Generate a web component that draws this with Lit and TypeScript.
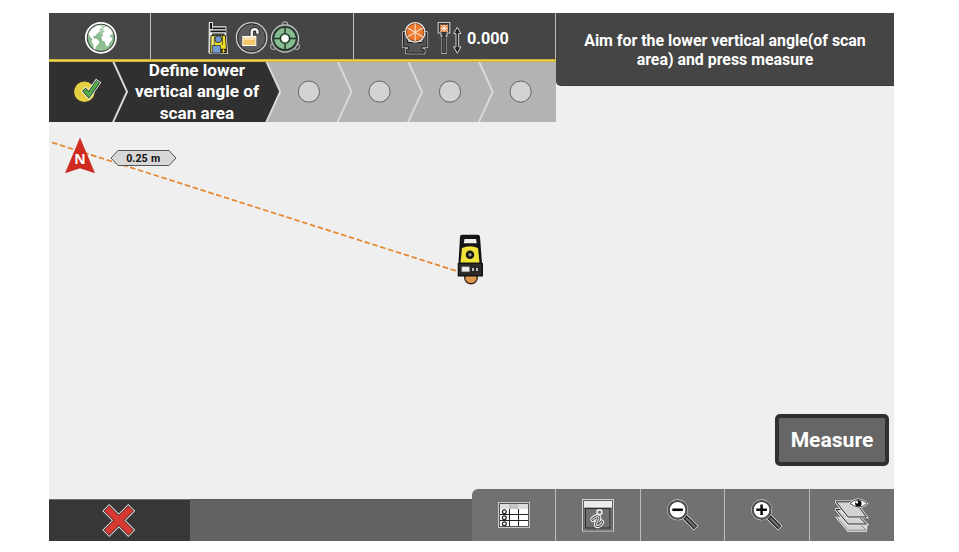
import { LitElement, html, css, svg } from "lit";
import { customElement } from "lit/decorators.js";

const globe = html`<svg width="34" height="34" viewBox="84 21 34 34">
  <defs><linearGradient id="sea" x1="0" y1="0" x2="0" y2="1"><stop offset="0" stop-color="#c9dccb"/><stop offset=".5" stop-color="#86b98b"/><stop offset="1" stop-color="#93c496"/></linearGradient></defs>
  <circle cx="100.9" cy="37.8" r="15" fill="#f4f4f4" stroke="#fff" stroke-width="1.8"/>
  <circle cx="100.9" cy="37.8" r="13.6" fill="url(#sea)" stroke="#3f4a40" stroke-width="1.1"/>
  <path fill="#fff" d="M88.600 33.500l3-4.600 4.500-3 4.600-.3 1 2-2.500 1.500.8 2.300-2.700 1.700-1.800 2.700-2.600.3 1.200 2.400 2.800.4 2.400 2.400-.8 3-2.600 2.300-.7 3-1.300-.5-.6-4.500-1.800-2.900 1-3-2.300-1.600z"/>
  <path fill="#fff" d="M104.200 27.300l3-.9 3.600 3.200 2.200 4.300-2 .7-1.500 2.600 2.800.3-.6 3-2.400 2.500-.8 2.800-2.400.5-1.300-4.600-2.600-1.300-.8-3 1.800-2.400-1-1.400 2.200-2.400-1.200-1.500z"/>
</svg>`;

const station = html`<svg width="22" height="34" viewBox="207 21 22 34">
  <path d="M209.400 22.500h3v4.300h13.400v8l1.700 18.700h-17.300l-1.200-1z" fill="#f3f3f3" stroke="#ddd" stroke-width="1.200"/>
  <path d="M210 23h2v6h-2zM212.500 27.500h13v1.800h-13zM210.500 30.500h15.300v1.800h-15.300zM212 33.500h12.500v1.300h-12.500z" fill="#161616"/>
  <path d="M211 35.500h14.300l1.500 17.300h-16.300z" fill="#f1df24" stroke="#242414" stroke-width=".9"/>
  <path d="M213 36.500v9" stroke="#fff" stroke-width="1"/><path d="M214.300 36v9M222.500 36v9" stroke="#3a3820" stroke-width=".8"/>
  <circle cx="218.300" cy="39.200" r="3.400" fill="#7295cd" stroke="#252c38" stroke-width=".9"/>
  <rect x="212.300" y="45.500" width="8.200" height="7.500" fill="#719bd2" stroke="#333b48" stroke-width=".8"/>
  <path d="M220.800 48.800h5.400v4.200h-5.400z" fill="#18180e"/><path d="M221.500 51h4M223.500 49.300v3.400" stroke="#e5d01f" stroke-width="1.100"/>
</svg>`;

const lock = html`<svg width="34" height="34" viewBox="235 21 34 34">
  <circle cx="251.600" cy="37.800" r="15.200" fill="#555" stroke="#cfcfcf" stroke-width="1.300"/>
  <circle cx="251.600" cy="37.800" r="14" fill="#5c5c5c" stroke="#2c2c2c" stroke-width="1"/>
  <path d="M251.800 37v-5q0-2.700 2.800-2.700t2.900 2.700v2.200" fill="none" stroke="#1e1e1e" stroke-width="4.200"/>
  <path d="M251.800 37v-5q0-2.700 2.800-2.700t2.900 2.700v1.800" fill="none" stroke="#f1f1ed" stroke-width="2.600"/>
  <rect x="242.800" y="36.500" width="13" height="9" fill="#f4c866" stroke="#fff" stroke-width="1"/>
  <path d="M243.300 37h12v3h-12z" fill="#fae2ac"/>
</svg>`;

const target = html`<svg width="32" height="34" viewBox="269 21 32 34">
  <g fill="#454545" stroke="#bfc5c1" stroke-width="1"><circle cx="285" cy="24.800" r="3"/><circle cx="273.500" cy="46.500" r="3"/><circle cx="296.500" cy="46.500" r="3"/></g>
  <circle cx="285" cy="38.500" r="13.600" fill="#454b47" stroke="#c6ccc8" stroke-width="1.100"/>
  <circle cx="285" cy="38.500" r="11.300" fill="#85bd91" stroke="#202d25" stroke-width="1.100"/>
  <path d="M285 27v23M273.500 38.500h23" stroke="#26382c" stroke-width="1.500"/>
  <circle cx="285" cy="38.500" r="4.800" fill="#9cc7a5" stroke="#203126" stroke-width="1.300"/>
  <circle cx="285" cy="38.500" r="3.300" fill="#fff"/>
</svg>`;

const prism = html`<svg width="30" height="34" viewBox="400 21 30 34">
  <path d="M403.400 32.500h4v10h15.500v-10h4v14.300h-5.200v2.500h2.500v3.800h-18v-3.800h2.500v-2.500h-5.300z" fill="#444" stroke="#cecece" stroke-width="2.400" stroke-linejoin="round"/>
  <path d="M403.400 32.500h4v10h15.500v-10h4v14.300h-5.200v2.500h2.500v3.800h-18v-3.800h2.500v-2.500h-5.300z" fill="#555" stroke="#161616" stroke-width="1"/>
  <circle cx="415.200" cy="32.300" r="9.700" fill="#e8772b" stroke="#eee" stroke-width="1.400"/>
  <circle cx="415.200" cy="32.300" r="8.700" fill="#ec7a2d" stroke="#663619" stroke-width=".7"/>
  <path d="M415.200 23.600v17.400M407.600 28l15.200 8.700M422.800 28l-15.200 8.700" stroke="#f9dcc6" stroke-width="1.100"/>
</svg>`;

const pole = html`<svg width="26" height="34" viewBox="437 21 26 34">
  <path d="M438.200 22.500h11.600v10.500h-2.800v3h-1v17.400h-4v-17.400h-1v-3h-2.800z" fill="#333" stroke="#c9c9c9" stroke-width="1.100"/>
  <path d="M442.400 37h3.200v15.800h-3.200z" fill="#4e4e4e" stroke="#171717" stroke-width=".7"/>
  <rect x="440.300" y="24.700" width="7.600" height="7.200" fill="#e77d3a"/>
  <path d="M440.500 25l7.200 6.600M447.700 25l-7.200 6.600M444.100 24.700v7.200M440.300 28.300h7.600" stroke="#fff1e6" stroke-width="1"/>
  <path d="M457.300 27.300l3.700 6.300h-2.400v13.300h2.400l-3.700 6.300-3.700-6.300h2.400v-13.300h-2.400z" fill="#202020" stroke="#d2d2d2" stroke-width="1" stroke-linejoin="round"/>
</svg>`;

const stepShapes = svg`
  <rect x="49" y="61" width="507.500" height="61" fill="#b3b3b3"/>
  <path d="M49 61h217l14.500 30.700-14.500 30.300h-217z" fill="#303030"/>
  <g fill="none" stroke="#d9d9d9" stroke-width="2"><path d="M113 61l14 30.700-14 30.600"/><path d="M266.200 61l14 30.700-14 30.600M337.500 61l14 30.700-14 30.600M408 61l14 30.700-14 30.600M478.700 61l14 30.700-14 30.600"/></g>
  <g fill="#d3d3d3" stroke="#636363" stroke-width="1"><circle cx="308.900" cy="91.600" r="10.600"/><circle cx="379.500" cy="91.600" r="10.600"/><circle cx="450" cy="91.600" r="10.600"/><circle cx="520.600" cy="91.600" r="10.600"/></g>
  <circle cx="84.400" cy="91.700" r="10.300" fill="#e5cf43"/>
  <g fill="none" stroke-linecap="square"><path d="M85.500 91.200l3.300 3.700 8-11.600" stroke="#fff" stroke-width="6.400"/>
  <path d="M85.500 91.200l3.300 3.700 8-11.600" stroke="#1c2b1a" stroke-width="4.900"/>
  <path d="M85.500 91.200l3.300 3.700 8-11.600" stroke="#56ad4e" stroke-width="3.500"/></g>`;

const cross = html`<svg width="34" height="34" viewBox="102 503.500 34 34">
  <g fill="none" stroke-linecap="square"><path d="M109.300 510.500l19 19M128.300 510.500l-19 19" stroke="#e8e8e8" stroke-width="9.800"/>
  <path d="M109.300 510.500l19 19M128.300 510.500l-19 19" stroke="#321d1b" stroke-width="8"/>
  <path d="M109.300 510.500l19 19M128.300 510.500l-19 19" stroke="#d53932" stroke-width="6.700"/></g>
</svg>`;

const table = html`<svg width="34" height="28" viewBox="497 501 34 28">
  <rect x="498.500" y="502.500" width="31" height="25" fill="#fff" stroke="#c9c9c9"/>
  <rect x="499.500" y="503.500" width="29" height="23" fill="#fff" stroke="#555"/>
  <path d="M500 504h28v5h-28z" fill="#ddd"/><path d="M509 504h9v5h-9z" fill="#c4c4c4"/>
  <path d="M500 514.500h28M500 520.500h28M509.500 509v17M518.500 509v17" stroke="#222" stroke-width="1"/>
  <g fill="#fff" stroke="#222" stroke-width="1.200"><circle cx="504.300" cy="511.800" r="1.900"/><circle cx="504.300" cy="517.700" r="1.900"/><circle cx="504.300" cy="523.700" r="1.900"/></g>
</svg>`;

const info = html`<svg width="34" height="34" viewBox="581 498 34 34">
  <rect x="582.500" y="499.500" width="31" height="31.500" fill="#818181" stroke="#d4d4d4"/>
  <rect x="583.500" y="500.500" width="29" height="29.500" fill="#777" stroke="#606060"/>
  <path d="M584 501h28v6.500h-28z" fill="#ececec"/>
  <rect x="585.500" y="508.500" width="24.500" height="19.500" fill="#707070" stroke="#2d2d2d"/>
  <circle cx="599.400" cy="512.300" r="2.500" fill="#777" stroke="#eee" stroke-width="1.400"/>
  <g fill="none" stroke-linecap="round" stroke-linejoin="round"><path d="M592.800 519.300q3.500-3.500 5.500-2.300 1.200.9-.6 4-2.200 4.300-.3 4.600 2 .1 4.200-3.500" stroke="#f4f4f4" stroke-width="5.200"/>
  <path d="M592.800 519.300q3.500-3.500 5.500-2.300 1.200.9-.6 4-2.200 4.300-.3 4.600 2 .1 4.200-3.500" stroke="#333" stroke-width="3"/>
  <path d="M592.800 519.300q3.500-3.500 5.500-2.300 1.200.9-.6 4-2.200 4.300-.3 4.600 2 .1 4.200-3.500" stroke="#ccc" stroke-width="1.500"/></g>
</svg>`;

const zoomIcon = (plus: boolean) => html`<svg width="34" height="34" viewBox="666 498 34 34">
  <path d="M684.500 516.500l11.700 11.800" stroke="#ddd" stroke-width="6.500"/>
  <path d="M684 516l11.700 11.700" stroke="#222" stroke-width="4.800"/>
  <path d="M686 518l9.300 9.300" stroke="#777" stroke-width="2"/>
  <circle cx="677.600" cy="509.800" r="10.500" fill="#d9d9d9"/><circle cx="677.600" cy="509.800" r="8.900" fill="#fff" stroke="#303030" stroke-width="2"/><circle cx="677.600" cy="509.800" r="8.900" fill="none" stroke="#707070" stroke-width=".7"/>
  <path d="${plus ? "M672.300 509.800h10.600M677.600 504.500v10.600" : "M672.300 509.800h10.600"}" stroke="#080808" stroke-width="2.500"/>
</svg>`;

const layers = html`<svg width="34" height="34" viewBox="835.500 498 34 34">
  <path d="M836.500 517h15l15.500 7v7h-18.500z" fill="#d3d3d3" stroke="#eee" stroke-width="1.400" stroke-linejoin="round"/>
  <g fill="#d3d3d3" stroke="#292929" stroke-width="1"><path d="M836.500 516.500h15l15.500 13.700h-18.500z" stroke="#8a8a8a"/>
  <path d="M836.500 509.500h15l15.500 14.500h-18.500z" stroke="#f2f2f2" stroke-width="2.400"/><path d="M836.500 509.500h15l15.500 14.500h-18.500z"/>
  <path d="M836.500 501.800h19l11.500 15.200h-18.500z" stroke="#f2f2f2" stroke-width="2.400"/><path d="M836.500 501.800h19l11.500 15.200h-18.500z"/></g>
  <path d="M850.500 503.500q8-8 17 0-8 7.300-17 0z" fill="#fff" stroke="#e6e6e6" stroke-width="2"/>
  <path d="M850.500 503.500q8-8 17 0-8 7.300-17 0z" fill="#fff" stroke="#333" stroke-width=".9"/>
  <circle cx="858.800" cy="503.400" r="3.200" fill="#080808"/><circle cx="857.300" cy="502.300" r="1.200" fill="#fff"/>
</svg>`;

@customElement("app-root")
export class AppRoot extends LitElement {
  static styles = css`
    :host { display: block; height: 552px; background: #fff; overflow: hidden; font-family: Roboto, "Liberation Sans", sans-serif; font-weight: 700; color: #fff; }
    svg { display: block; flex: none; }
    .device { position: relative; width: 845px; height: 528px; margin: 13px 0 0 49px; background: #efefef; display: flex; flex-direction: column; justify-content: space-between; overflow: hidden; }
    :host::before { content: ""; display: table; }
    .map { position: absolute; inset: 0; }
    .top { position: relative; display: flex; align-items: flex-start; height: 109px; }
    .left { width: 507px; }
    .status { display: grid; grid-template-columns: 102px 203px 202px; height: 46px; background: #454545; }
    .cell { display: flex; align-items: center; justify-content: center; box-sizing: border-box; height: 46px; border-right: 1px solid #bcbcbc; padding: 4px 0 0 3px; }
    .cell.sensors { justify-content: flex-start; padding-left: 56px; }
    .cell.sensors .st { margin-right: 6px; }
    .cell.height { justify-content: flex-start; padding-left: 46px; gap: 7px; }
    .reading { font-size: 16.200px; line-height: 34px; margin: 2px 0 0 -3px; }
    .rule { height: 3px; background: linear-gradient(#b19e35, #ecd340 40%, #ecd340 70%, #9b8f4c); }
    .track { display: grid; height: 60px; }
    .track > * { grid-area: 1 / 1; }
    .step-label { z-index: 1; margin: -2px 0 0 78px; width: 140px; text-align: center; font-size: 17.150px; line-height: 21.300px; white-space: nowrap; }
    .notice { box-sizing: border-box; width: 338px; height: 73px; background: #454545; border-bottom: 1px solid #383838; border-bottom-left-radius: 5px; text-align: center; font-size: 15.900px; line-height: 19px; padding-top: 18px; white-space: nowrap; }
    .foot { position: relative; display: flex; flex-direction: column; align-items: flex-end; }
    .measure { box-sizing: border-box; width: 114px; height: 52px; margin: 0 5px 23px 0; border: 4px solid #303030; border-radius: 5px; background: #666; color: #fff; font: 700 21.100px/44px Roboto, "Liberation Sans", sans-serif; padding: 0; }
    .bar { display: flex; align-items: flex-end; width: 100%; }
    .cancel { box-sizing: border-box; width: 141px; height: 42px; background: #373737; border-top: 1px solid #707070; display: flex; align-items: center; justify-content: center; padding-right: 2px; }
    .fill { flex: 1; height: 42px; box-sizing: border-box; background: #636363; border-top: 1px solid #555; margin-right: -6px; }
    .tools { position: relative; display: grid; grid-template-columns: 84px 85px 84px 85px 84px; width: 422px; height: 52px; background: #717171; border-top-left-radius: 6px; overflow: hidden; }
    .tool { box-sizing: border-box; display: flex; align-items: center; justify-content: center; border-right: 1px solid #bbb; }
    .tool:last-child { border: 0; }
    .bearing { font: 700 14px "Open Sans", sans-serif; fill: #fff; }
    .scale { font: 700 10.700px Roboto, sans-serif; fill: #111; word-spacing: .6px; }
  `;

  render() {
    return html`<div class="device">
      <svg class="map" width="845" height="528" viewBox="49 13 845 528">
        <path d="M52 142.500L458 271.500" fill="none" stroke="#e5862b" stroke-width="1.700" stroke-dasharray="5.500 2.700"/>
        <path d="M80 137.500l15 35.800-15-5-15 5z" fill="#cf2b20"/>
        <text class="bearing" x="80" y="164" text-anchor="middle">N</text>
        <path d="M111 158l7-7.500h51l7 7.500-7 7.500h-51z" fill="#d8d8d8" stroke="#555" stroke-width="1"/>
        <text class="scale" x="143.200" y="162" text-anchor="middle">0.25 m</text>
        <circle cx="471" cy="277.500" r="6.300" fill="#e09a50" stroke="#37281d" stroke-width="1.400"/>
        <path d="M460 237q0-2.300 2.300-2.300h15.400q2.300 0 2.300 2.300l2 26h1v13.500h-25.300v-13.500h.8z" fill="#141414"/>
        <path d="M464.500 239h11.500l.8 4.300h-13z" fill="#eee"/>
        <path d="M462 248q8-3.500 16 0l1.500 14.500h-19z" fill="#f0e43b"/>
        <circle cx="470" cy="254.800" r="4.300" fill="#161616"/><circle cx="470" cy="254.800" r="1.700" fill="#999"/>
        <path d="M459 264h22.500v11h-22.500z" fill="#292929"/>
        <rect x="461.800" y="266.800" width="7.700" height="5" fill="#eee" stroke="#888" stroke-width=".6"/>
        <path d="M473 268v3M477 268v3" stroke="#ddd" stroke-width="1.600"/>
      </svg>
      <div class="top">
        <div class="left">
          <div class="status">
            <div class="cell">${globe}</div>
            <div class="cell sensors"><span class="st">${station}</span>${lock}${target}</div>
            <div class="cell height">${prism}${pole}<span class="reading">0.000</span></div>
          </div>
          <div class="rule"></div>
          <div class="track">
            <svg width="507" height="60" viewBox="49 62 507 60">${stepShapes}</svg>
            <div class="step-label">Define lower<br>vertical angle of<br>scan area</div>
          </div>
        </div>
        <div class="notice">Aim for the lower vertical angle(of scan<br>area) and press measure</div>
      </div>
      <div class="foot">
        <button class="measure">Measure</button>
        <div class="bar">
          <div class="cancel">${cross}</div>
          <div class="fill"></div>
          <div class="tools">
            <div class="tool">${table}</div>
            <div class="tool">${info}</div>
            <div class="tool">${zoomIcon(false)}</div>
            <div class="tool">${zoomIcon(true)}</div>
            <div class="tool">${layers}</div>
          </div>
        </div>
      </div>
    </div>`;
  }
}
